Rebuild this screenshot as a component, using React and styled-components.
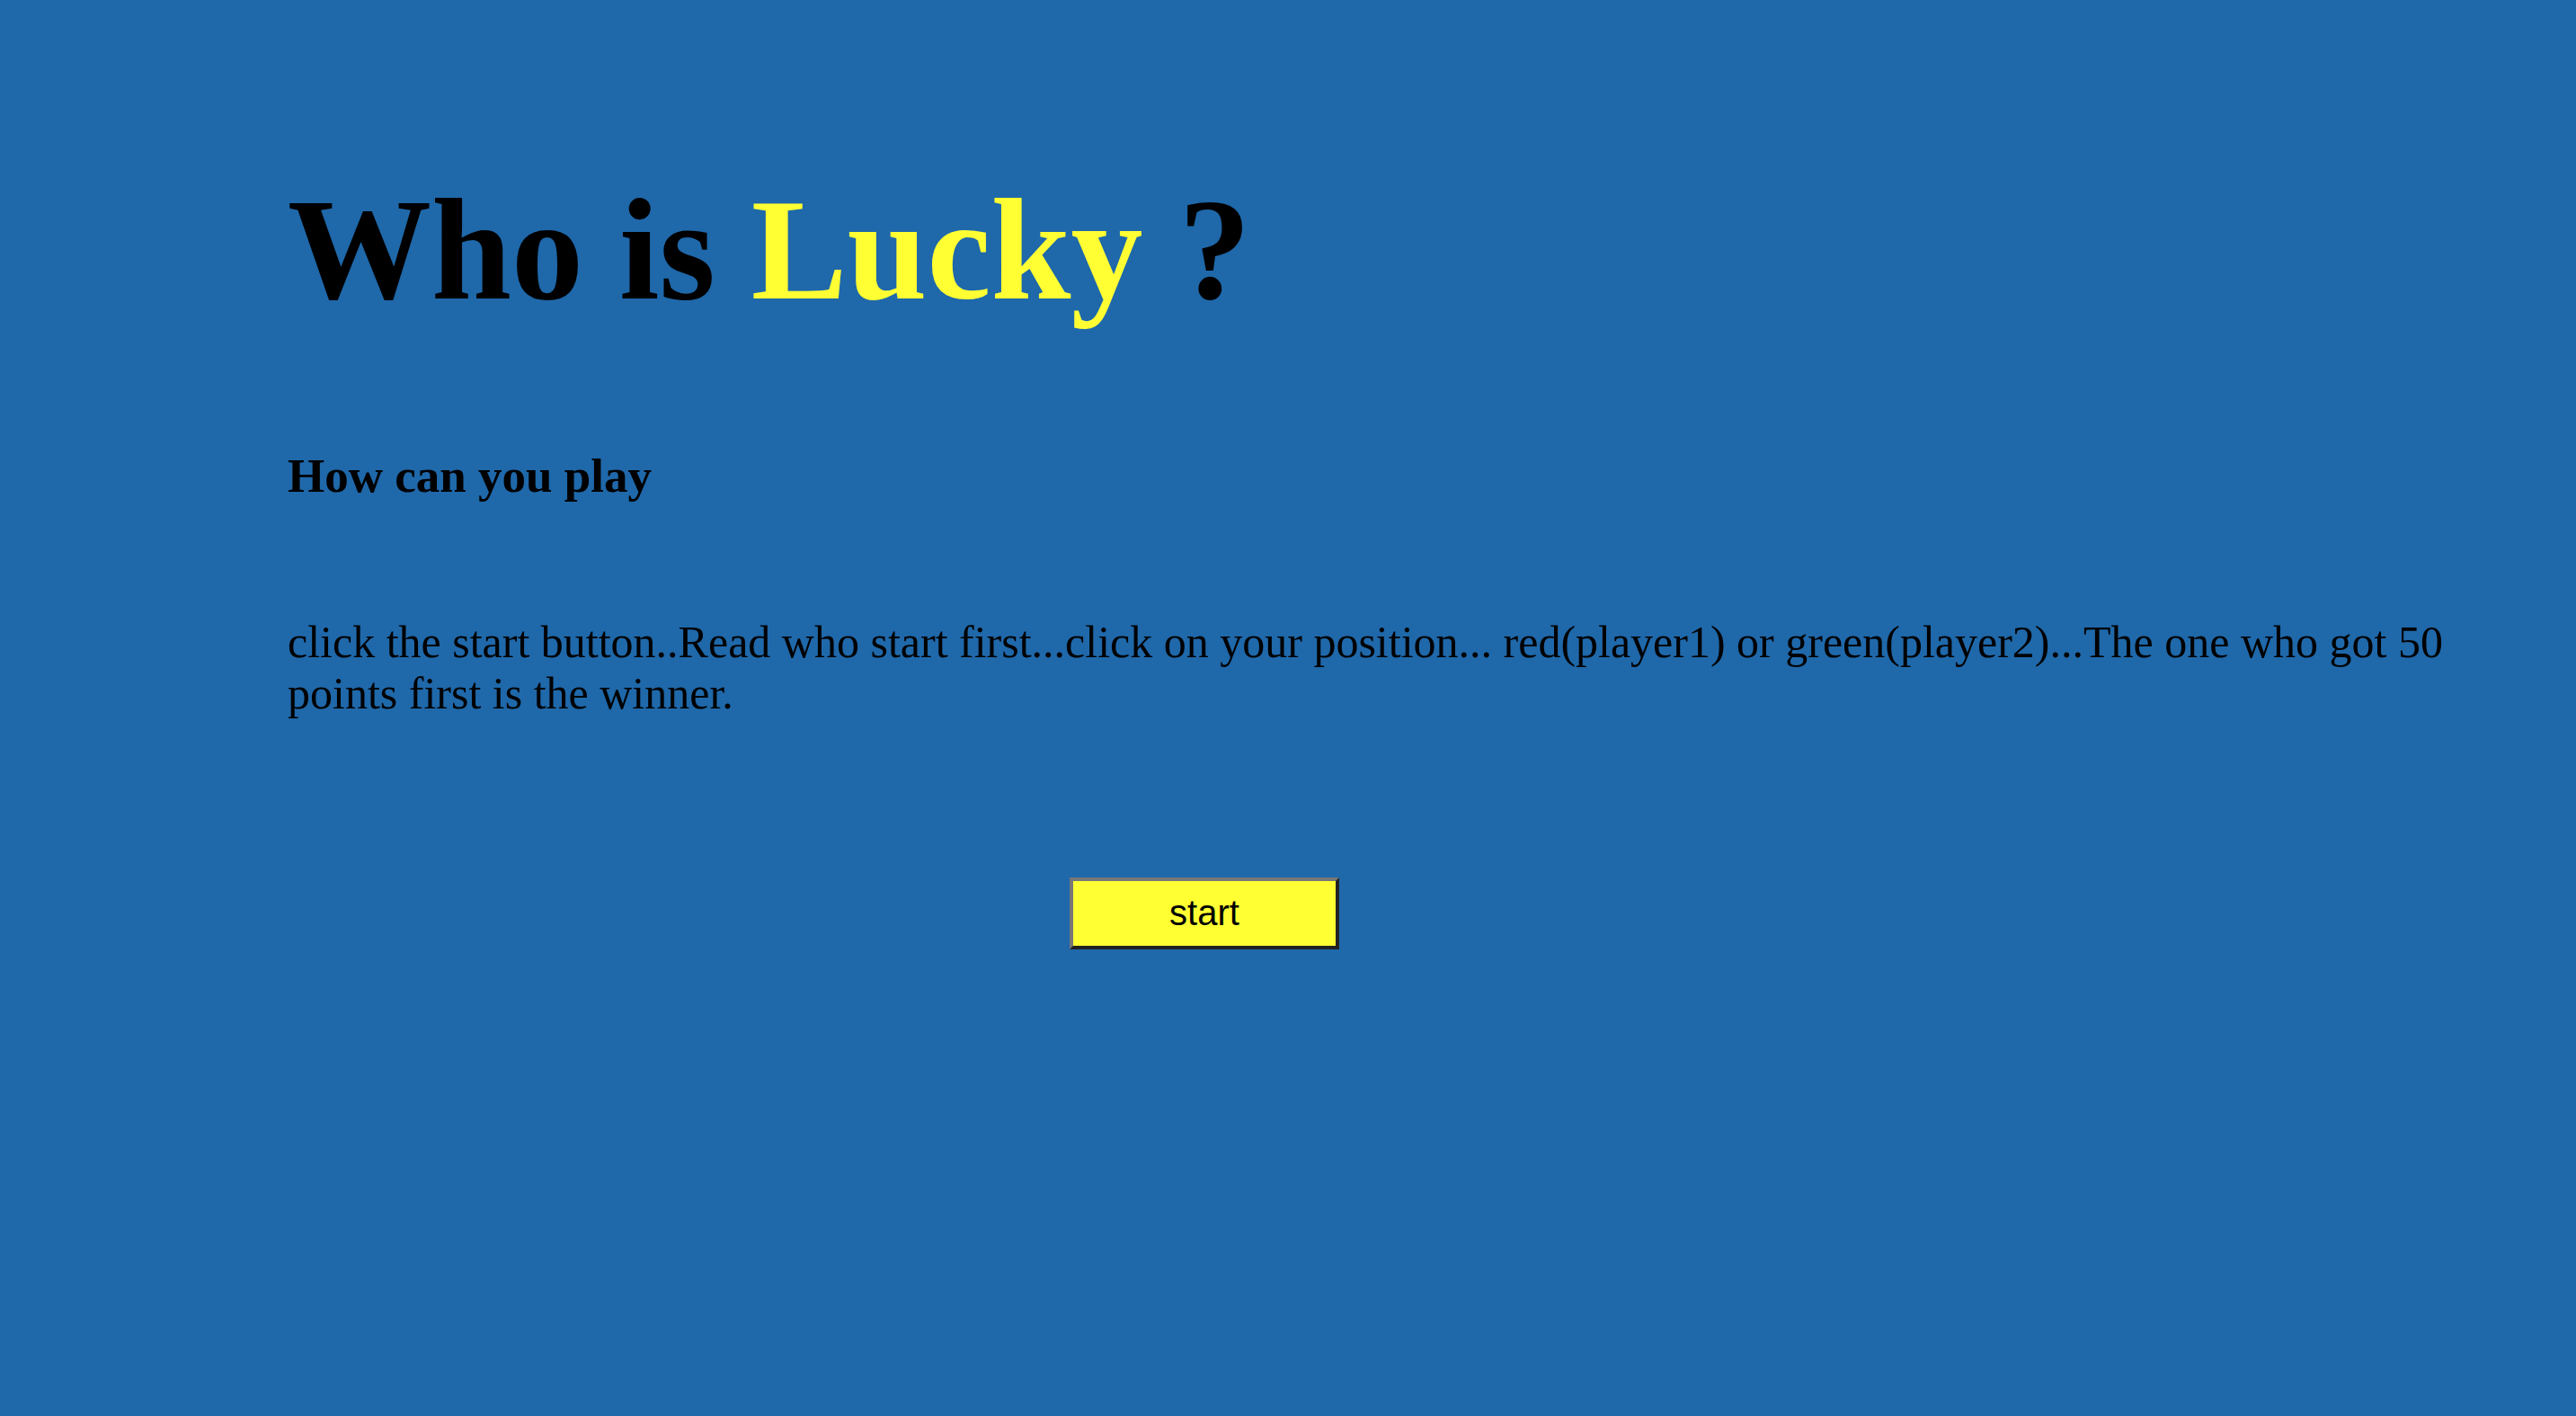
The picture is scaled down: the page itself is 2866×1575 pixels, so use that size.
import styled, { createGlobalStyle } from 'styled-components';

const GlobalStyle = createGlobalStyle`
  html, body {
    margin: 0;
    padding: 0;
    background: #1f68aa;
  }
  body {
    font-family: "Liberation Serif", "Times New Roman", serif;
    color: #000;
  }
`;

const Page = styled.div`
  min-height: 1575px;
  padding: 0 100px 0 320px;
  box-sizing: border-box;
`;

const Title = styled.h1`
  margin: 0;
  padding-top: 186px;
  font-size: 160px;
  font-weight: bold;
  line-height: 1.15;
`;

const Lucky = styled.span`
  color: #ffff33;
`;

const Subtitle = styled.h3`
  margin: 0;
  padding-top: 129px;
  font-size: 53px;
  font-weight: bold;
  line-height: 1.15;
`;

const Rules = styled.p`
  margin: 0;
  padding-top: 126px;
  font-size: 50px;
  line-height: 1.15;
`;

const StartButton = styled.button`
  display: block;
  margin: 175px 0 0 870px;
  width: 300px;
  height: 80px;
  background: #ffff33;
  border: 4px solid;
  border-color: #777 #222 #222 #777;
  font-family: "Liberation Sans", Arial, sans-serif;
  font-size: 40px;
  color: #000;
  cursor: pointer;
`;

export default function App() {
  return (
    <>
      <GlobalStyle />
      <Page>
        <Title>
          Who is <Lucky>Lucky</Lucky> ?
        </Title>
        <Subtitle>How can you play</Subtitle>
        <Rules>
          click the start button..Read who start first...click on your position... red(player1) or green(player2)...The one who got 50 points first is the winner.
        </Rules>
        <StartButton type="button">start</StartButton>
      </Page>
    </>
  );
}
